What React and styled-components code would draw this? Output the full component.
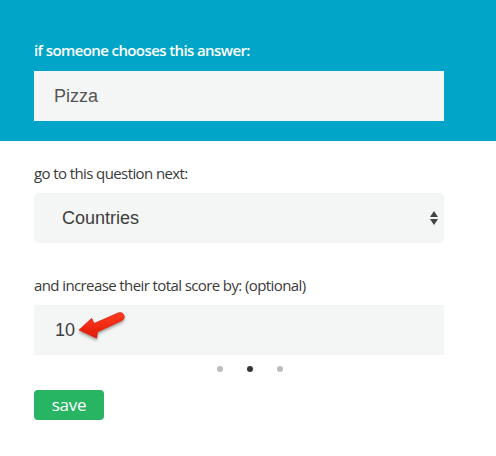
import React from "react";
import styled, { createGlobalStyle } from "styled-components";

const GlobalStyle = createGlobalStyle`
  html, body {
    margin: 0;
    padding: 0;
    background: #ffffff;
  }
  body {
    font-family: "Open Sans", "Liberation Sans", sans-serif;
    width: 496px;
  }
`;

const Header = styled.div`
  background: #00a5c8;
  padding: 40px 52px 20px 34px;
`;

const Label = styled.div`
  font-family: "Open Sans", sans-serif;
  font-size: 15px;
  line-height: 20px;
  letter-spacing: -0.6px;
  color: ${({ $light }) => ($light ? "#ffffff" : "#3a3a3a")};
  font-weight: ${({ $light }) => ($light ? 600 : 400)};
  margin-bottom: ${({ $gap }) => $gap}px;
`;

const Field = styled.div`
  position: relative;
  height: 50px;
  background: #f4f5f5;
  border-radius: ${({ $round }) => ($round ? "5px" : "0")};
  display: flex;
  align-items: center;
  padding-left: ${({ $indent }) => $indent}px;
  font-family: "Liberation Sans", Arial, sans-serif;
  font-size: 18px;
  color: ${({ $dark }) => ($dark ? "#3d3d3d" : "#555555")};
`;

const Body = styled.div`
  padding-top: 22px;
`;

const Fields = styled.div`
  padding: 0 52px 0 34px;
`;

const Group = styled.div`
  margin-bottom: ${({ $gap }) => $gap}px;
`;

const SelectArrows = styled.svg`
  position: absolute;
  right: 6px;
  top: 18px;
`;

const Pointer = styled.svg`
  position: absolute;
  left: 0;
  top: 0;
  overflow: visible;
`;

const Dots = styled.div`
  display: flex;
  justify-content: center;
  gap: 24px;
  padding: 11px 0 18px 4px;
`;

const Dot = styled.span`
  width: 6px;
  height: 6px;
  border-radius: 50%;
  background: ${({ $active }) => ($active ? "#333333" : "#bdbdbd")};
`;

const Actions = styled.div`
  padding-left: 34px;
`;

const SaveButton = styled.button`
  width: 70px;
  height: 30px;
  border: none;
  border-radius: 4px;
  background: #27b463;
  color: #ffffff;
  font-family: "Open Sans", sans-serif;
  font-size: 17px;
  letter-spacing: -0.3px;
  padding: 0 0 2px 0;
  cursor: pointer;
`;

export default function App() {
  return (
    <>
      <GlobalStyle />
      <Header>
        <Label $light $gap={11}>if someone chooses this answer:</Label>
        <Field $indent={20}>Pizza</Field>
      </Header>

      <Body>
        <Fields>
          <Group $gap={32}>
            <Label $gap={10}>go to this question next:</Label>
            <Field $round $indent={28} $dark>
              Countries
              <SelectArrows width="8" height="14" viewBox="0 0 8 14">
                <path d="M4 0 L8 6 L0 6 Z" fill="#444" />
                <path d="M0 8 L8 8 L4 14 Z" fill="#444" />
              </SelectArrows>
            </Field>
          </Group>

          <Group $gap={0}>
            <Label $gap={10}>and increase their total score by: (optional)</Label>
            <Field $indent={21} $dark>
              10
              {/* red annotation arrow */}
              <Pointer width="100" height="45" viewBox="0 0 100 45">
                <defs>
                  <filter id="sh" x="-30%" y="-30%" width="160%" height="160%">
                    <feDropShadow dx="0" dy="2" stdDeviation="1.5" floodColor="#000" floodOpacity="0.35" />
                  </filter>
                  <linearGradient id="red" x1="0" y1="0" x2="0" y2="1">
                    <stop offset="0" stopColor="#ff3a1e" />
                    <stop offset="1" stopColor="#e01c08" />
                  </linearGradient>
                </defs>
                <path
                  d="M45 25 L57.7 13.3 L60 18.5 L84 8 A4 4 0 0 1 88 15.5 L63.5 27 L62.7 33.3 Z"
                  fill="url(#red)"
                  stroke="#c81806"
                  strokeWidth="0.6"
                  strokeLinejoin="round"
                  filter="url(#sh)"
                />
              </Pointer>
            </Field>
          </Group>
        </Fields>

        <Dots>
          <Dot />
          <Dot $active />
          <Dot />
        </Dots>

        <Actions>
          <SaveButton>save</SaveButton>
        </Actions>
      </Body>
    </>
  );
}
